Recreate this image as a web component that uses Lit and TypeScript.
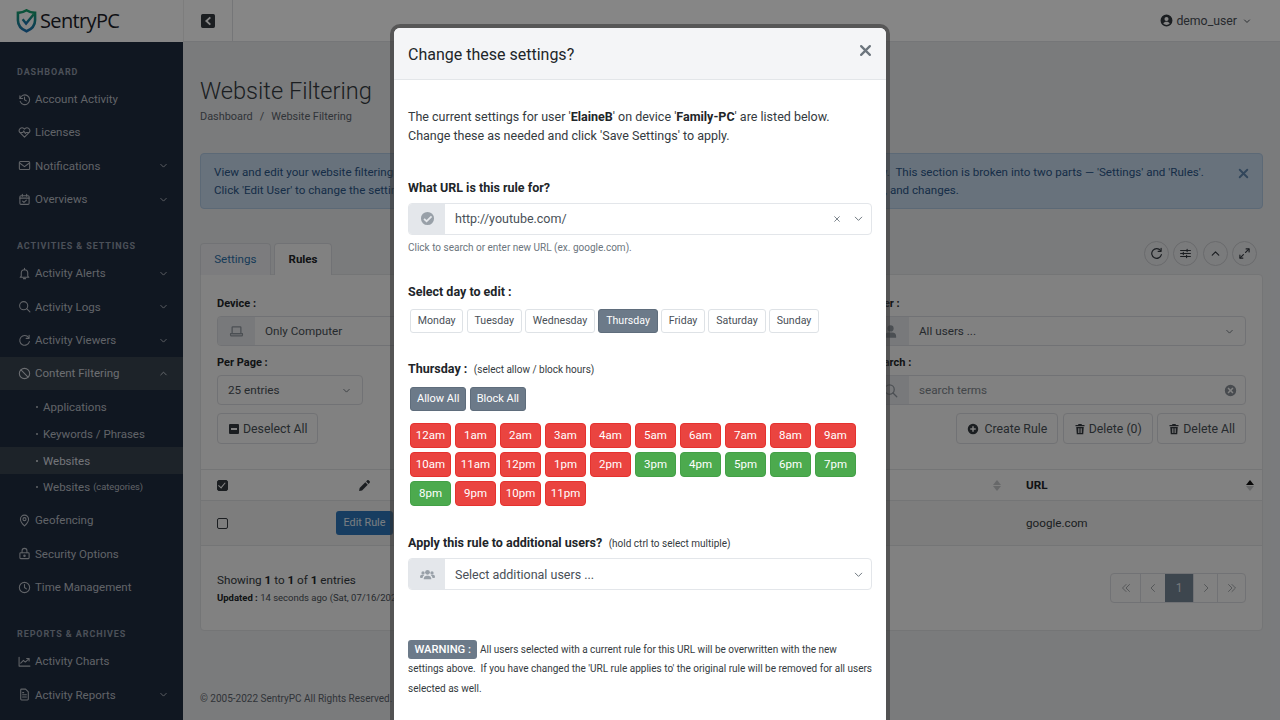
import { LitElement, html, css, svg, nothing } from "lit";
import { customElement } from "lit/decorators.js";

const paths: Record<string, any> = {
  history: svg`<path d="M3.5 5v5h5"/><path d="M3.8 10A9 9 0 1 1 4 15.5"/><path d="M12 7.5V12.5l3.5 2"/>`,
  heart: svg`<path d="M12 20.5 3.8 12.3a5.2 5.2 0 0 1 0-7.3 5.2 5.2 0 0 1 7.3 0l.9.9.9-.9a5.2 5.2 0 0 1 7.3 0 5.2 5.2 0 0 1 0 7.3z"/><path d="M4 12h5l1.5-3 3 5 1.5-2h5"/>`,
  mail: svg`<rect x="2.5" y="4.5" width="19" height="15" rx="2"/><path d="m3 7.5 9 6.5 9-6.5"/>`,
  calendar: svg`<rect x="3.5" y="5" width="17" height="16" rx="2"/><path d="M3.5 9.5h17M8 2.5V6M16 2.5V6"/><path d="m8.5 15 2.5 2.5 4.5-4.5"/>`,
  bell: svg`<path d="M6 17V11a6 6 0 0 1 12 0v6l2 2H4z"/><path d="M12 2.5V5M10 21.5h4"/>`,
  search: svg`<circle cx="10.5" cy="10.5" r="7.5"/><path d="m16 16 6 6"/>`,
  redo: svg`<path d="M19.5 6.5A9 9 0 1 0 21 14"/><path d="M20.5 2.5v5.5H15"/>`,
  ban: svg`<circle cx="12" cy="12" r="9.5"/><path d="m5.5 5.5 13 13"/>`,
  pin: svg`<path d="M12 22s7.5-7.2 7.5-12.5a7.5 7.5 0 0 0-15 0C4.500 14.800 12 22 12 22z"/><circle cx="12" cy="9.500" r="2.800"/>`,
  lock: svg`<rect x="3.500" y="10.500" width="17" height="11" rx="1.500"/><path d="M7.500 10.500V7a4.500 4.500 0 0 1 9 0v3.500"/><circle cx="12" cy="16" r="1.300"/>`,
  clock: svg`<circle cx="12" cy="12" r="9.500"/><path d="M12 6.500V12l3.500 2.500"/>`,
  chart: svg`<path d="M2 4v16.500h20"/><path d="m5 15 5-5 3.500 3L20 7"/><path d="M16 6.500h4.500V11"/>`,
  file: svg`<path d="M5 3.500a1.500 1.500 0 0 1 1.500-1.500H14l5 5v13.500a1.500 1.500 0 0 1-1.500 1.500h-11A1.500 1.500 0 0 1 5 20.500z"/><path d="M8.500 12.500h7M8.500 16.500h7M8.500 8.500h2"/>`,
  down: svg`<path d="m6 9.500 6 6 6-6"/>`,
  up: svg`<path d="m6 15 6-6 6 6"/>`,
  left: svg`<path d="m15 5-7 7 7 7"/>`,
  right: svg`<path d="m9 5 7 7-7 7"/>`,
  dleft: svg`<path d="m12 5-7 7 7 7M19 5l-7 7 7 7"/>`,
  dright: svg`<path d="m5 5 7 7-7 7M12 5l7 7-7 7"/>`,
  laptop: svg`<rect x="5" y="4.500" width="14" height="11" rx="1"/><path d="M2.500 15.500h19v2a1.500 1.500 0 0 1-1.500 1.500H4a1.500 1.500 0 0 1-1.500-1.500z"/>`,
  sliders: svg`<path d="M3 6.500h18M3 12h18M3 17.500h18"/><path d="M15 4.500v4M8 10v4M14 15.500v4"/>`,
  expand: svg`<path d="M14 10 20 4M10 14l-6 6"/><path d="M15 3.500h5.500V9M9 20.500H3.500V15"/>`,
  x: svg`<path d="m5 5 14 14M19 5 5 19"/>`,
};
const ic = (n: string, cls = "") => html`<svg class="i ${cls}" viewBox="0 0 24 24" fill="none" stroke="currentColor" stroke-width="2" stroke-linecap="round" stroke-linejoin="round">${paths[n]}</svg>`;

const solid = {
  trash: svg`<path d="M9 2h6l1 2h5v2.500H3V4h5z"/><path fill-rule="evenodd" d="M4.500 8h15l-1 14.500h-13zM8.500 10.500v9.500h1.500v-9.500zM11.250 10.500v9.500h1.500v-9.500zM14 10.500v9.500h1.500v-9.500z"/>`,
  plus: svg`<path fill-rule="evenodd" d="M12 1.500a10.500 10.500 0 1 1 0 21 10.500 10.500 0 0 1 0-21zM10.500 6.500V10.500H6.500v3h4v4h3v-4h4v-3h-4V6.500z"/>`,
  minus: svg`<path fill-rule="evenodd" d="M4 2h16a2 2 0 0 1 2 2v16a2 2 0 0 1-2 2H4a2 2 0 0 1-2-2V4a2 2 0 0 1 2-2zM6 10v4h12v-4z"/>`,
  user: svg`<circle cx="12" cy="7" r="5"/><path d="M3 22v-2a6.500 6.500 0 0 1 6.500-6.500h5A6.500 6.500 0 0 1 21 20v2z"/>`,
  users: svg`<circle cx="12" cy="8.500" r="3.800"/><circle cx="4.800" cy="9.500" r="2.600"/><circle cx="19.200" cy="9.500" r="2.600"/><path d="M6 19.500v-1.500a4.500 4.500 0 0 1 4.500-4h3a4.500 4.500 0 0 1 4.500 4v1.500z"/><path d="M0 16.500v-1a3 3 0 0 1 3-3h2.500a4 4 0 0 1 1.200.800A6 6 0 0 0 4 17.500H1zM24 16.500v-1a3 3 0 0 0-3-3h-2.500a4 4 0 0 0-1.200.800 6 6 0 0 1 2.700 4.200H23z"/>`,
  account: svg`<path fill-rule="evenodd" d="M12 1a11 11 0 1 1 0 22 11 11 0 0 1 0-22zM12 5.500a3.800 3.800 0 1 0 0 7.600 3.800 3.800 0 0 0 0-7.600zM12 14.500c-2.600 0-5 1-6 2.900a8 8 0 0 0 12 0c-1-1.900-3.400-2.900-6-2.900z"/>`,
  check: svg`<path fill-rule="evenodd" d="M12 1.500a10.500 10.500 0 1 1 0 21 10.500 10.500 0 0 1 0-21zM17.500 7.500l-7 7-3-3-2 2 5 5 9-9z"/>`,
  clear: svg`<path fill-rule="evenodd" d="M12 1.500a10.500 10.500 0 1 1 0 21 10.500 10.500 0 0 1 0-21zM8.500 6.500 6.500 8.500 10 12l-3.500 3.500 2 2L12 14l3.500 3.500 2-2L14 12l3.500-3.500-2-2L12 10z"/>`,
  pencil: svg`<path d="M17 2.500a2 2 0 0 1 2.800 0l1.700 1.700a2 2 0 0 1 0 2.800L19.500 9 15 4.500zM13.500 6 18 10.500 7.500 21 2 22l1-5.500z"/>`,
  collapse: svg`<path fill-rule="evenodd" d="M4 1.500h16A2.500 2.500 0 0 1 22.500 4v16a2.500 2.500 0 0 1-2.500 2.500H4A2.500 2.500 0 0 1 1.500 20V4A2.500 2.500 0 0 1 4 1.500zM14.500 5.500 7.500 12l7 6.500 2-2-4.800-4.500 4.800-4.500z"/>`,
};
const sic = (n: keyof typeof solid, cls = "") => html`<svg class="i ${cls}" viewBox="0 0 24 24" fill="currentColor">${solid[n]}</svg>`;

type NavItem = { label: string; icon: string; caret?: "down" | "up"; active?: boolean; sub?: { label: string; small?: string; active?: boolean }[] };
const nav: { title: string; items: NavItem[] }[] = [
  { title: "DASHBOARD", items: [
    { label: "Account Activity", icon: "history" },
    { label: "Licenses", icon: "heart" },
    { label: "Notifications", icon: "mail", caret: "down" },
    { label: "Overviews", icon: "calendar", caret: "down" },
  ]},
  { title: "ACTIVITIES & SETTINGS", items: [
    { label: "Activity Alerts", icon: "bell", caret: "down" },
    { label: "Activity Logs", icon: "search", caret: "down" },
    { label: "Activity Viewers", icon: "redo", caret: "down" },
    { label: "Content Filtering", icon: "ban", caret: "up", active: true, sub: [
      { label: "Applications" },
      { label: "Keywords / Phrases" },
      { label: "Websites", active: true },
      { label: "Websites", small: "(categories)" },
    ]},
    { label: "Geofencing", icon: "pin" },
    { label: "Security Options", icon: "lock" },
    { label: "Time Management", icon: "clock" },
  ]},
  { title: "REPORTS & ARCHIVES", items: [
    { label: "Activity Charts", icon: "chart" },
    { label: "Activity Reports", icon: "file", caret: "down" },
  ]},
];

const base = css`
  * { box-sizing: border-box; }
  .i { width: 14px; height: 14px; flex: none; display: block; }
`;

@customElement("app-sidebar")
class AppSidebar extends LitElement {
  static styles = [base, css`
    :host { display: flex; flex-direction: column; width: 183px; flex: none; background: #1f2c3f; color: #b8bdc5; font: 400 11.500px/16px Roboto, sans-serif; overflow: hidden; height: 720px; }
    .logo { height: 42px; flex: none; background: #fff; display: flex; align-items: center; padding-left: 16px; gap: 3px; }
    .logo svg { width: 21px; height: 24px; flex: none; margin-top: -1px; }
    .brand { font: 500 20px/24px "Open Sans", sans-serif; letter-spacing: -0.65px; color: #1c2128; }
    nav { padding-top: 23px; flex: 1; }
    .sec { font-size: 9px; line-height: 14px; font-weight: 700; letter-spacing: 0.9px; color: #8f99a8; padding-left: 17px; margin-top: 23.5px; margin-bottom: 3.5px; }
    .sec:first-child { margin-top: 0; }
    .item { height: 33.33px; display: flex; align-items: center; padding: 0 14px 0 18px; gap: 4px; }
    .item.on { background: #38434f; color: #cdd1d8; }
    .item .lbl { flex: 1; }
    .item .i { width: 13px; height: 13px; }
    .item .c { width: 11px; height: 11px; stroke-width: 2; }
    .subs { padding: 4px 0 3px; }
    .sub { height: 26.67px; display: flex; align-items: center; padding-left: 36px; gap: 3px; }
    .sub::before { content: ""; width: 2px; height: 2px; border-radius: 50%; background: currentColor; margin-right: 2px; }
    .sub.on { background: #38434f; color: #dcdfe5; }
    .sub small { font-size: 9.300px; }
  `];
  render() {
    return html`
      <div class="logo">
        <svg viewBox="0 0 24 28">
          <defs><linearGradient id="g" x1="0" y1="0" x2="0" y2="1"><stop offset="0" stop-color="#15a06a"/><stop offset="1" stop-color="#1a6fb0"/></linearGradient></defs>
          <path d="M2 4.500c4 0 7-1 10-3 3 2 6 3 10 3v8.500c0 6-4 10.500-10 13C6 23.500 2 19 2 13z" fill="none" stroke="url(#g)" stroke-width="3"/>
          <path d="m7.500 12 4 5 9-11" fill="none" stroke="url(#g)" stroke-width="2.800"/>
        </svg>
        <span class="brand">SentryPC</span>
      </div>
      <nav>
        ${nav.map(s => html`
          <div class="sec">${s.title}</div>
          ${s.items.map(it => html`
            <div class="item ${it.active ? "on" : ""}">
              ${ic(it.icon)}<span class="lbl">${it.label}</span>
              ${it.caret ? ic(it.caret, "c") : nothing}
            </div>
            ${it.sub ? html`<div class="subs">${it.sub.map(x => html`
              <div class="sub ${x.active ? "on" : ""}"><span>${x.label}</span>${x.small ? html`<small>${x.small}</small>` : nothing}</div>`)}</div>` : nothing}
          `)}
        `)}
      </nav>
    `;
  }
}

@customElement("app-modal")
class AppModal extends LitElement {
  static styles = [base, css`
    :host { display: flex; justify-content: center; align-items: flex-start; position: absolute; inset: 0; z-index: 10; padding-top: 28px; background: rgba(0,0,0,.475); overflow: hidden; font: 400 12.500px/19px Roboto, sans-serif; color: #343a40; }
    .dlg { width: 492px; min-height: 760px; background: #fff; border-radius: 6px 6px 0 0; box-shadow: 0 0 0 4px rgba(50,50,50,.55); flex: none; }
    header { height: 52px; background: #f4f5f7; border-bottom: 1px solid #e3e6e9; border-radius: 6px 6px 0 0; display: flex; align-items: center; justify-content: space-between; padding: 0 13px 0 14px; }
    h2 { font: 400 16px/24px Roboto, sans-serif; margin: 2px 0 0; color: #212529; }
    .close { width: 15px; height: 15px; color: #6c757d; stroke-width: 3.600; margin-top: -6px; }
    .body { padding: 26.5px 14px 0; }
    p { margin: 0; }
    b { font-weight: 700; color: #212529; }
    .lab { font: 700 12.500px/18px Roboto, sans-serif; color: #212529; }
    .lab span { font: 400 10px/18px Roboto, sans-serif; color: #343a40; margin-left: 6.500px; }
    .sel { display: flex; height: 32px; border: 1px solid #e3e6ea; border-radius: 4px; margin-top: 7px; align-items: center; overflow: hidden; }
    .add { width: 36px; align-self: stretch; background: #e4e7eb; display: flex; align-items: center; justify-content: center; color: #98a0a8; flex: none; }
    .add .i { width: 15px; height: 15px; }
    .val { flex: 1; padding-left: 10px; font-size: 12.500px; color: #495057; }
    .sel .c { width: 13px; height: 13px; color: #6c757d; margin-right: 6px; stroke-width: 1.800; }
    .sel .clr { width: 8px; height: 8px; color: #5c6670; margin-right: 11px; stroke-width: 2.400; }
    .help { font-size: 10px; line-height: 14px; margin-top: 6px; color: #6c757d; }
    .row { display: flex; gap: 3.300px; padding-left: 2px; margin-top: 8px; }
    .btn { height: 24px; padding: 0 6.800px; border: 1px solid #dee2e6; border-radius: 3px; font-size: 10.600px; line-height: 22px; color: #495057; background: #fff; }
    .btn.dark { background: #6c7a89; border-color: #5f6d7c; color: #fff; }
    .btn.sq { font-size: 11px; padding: 0 6px; }
    .hours { display: grid; grid-template-columns: repeat(10, 41px); gap: 4px; grid-auto-rows: 25.500px; row-gap: 3.500px; padding-left: 2px; margin-top: 12px; }
    .h { border-radius: 4px; color: #fff; display: flex; align-items: center; justify-content: center; font-size: 11.500px; }
    .h.r { background: #ea4440; border: 1px solid #e5322e; }
    .h.g { background: #4caa4e; border: 1px solid #43a047; }
    .warn { margin-top: 50px; font-size: 10px; line-height: 19.300px; color: #343a40; white-space: nowrap; }
    .badge { display: inline-block; background: #6c7a89; color: #fff; font-size: 11.200px; font-weight: 500; line-height: 19px; padding: 0 6.500px; border-radius: 3px; }
  `];
  render() {
    const green = new Set([15, 16, 17, 18, 19, 20]);
    const name = (h: number) => `${h % 12 === 0 ? 12 : h % 12}${h < 12 ? "am" : "pm"}`;
    const days = ["Monday", "Tuesday", "Wednesday", "Thursday", "Friday", "Saturday", "Sunday"];
    return html`
      <div class="dlg">
        <header><h2>Change these settings?</h2>${ic("x", "close")}</header>
        <div class="body">
          <p>The current settings for user '<b>ElaineB</b>' on device '<b>Family-PC</b>' are listed below.<br>Change these as needed and click 'Save Settings' to apply.</p>
          <div class="lab" style="margin-top:34px">What URL is this rule for?</div>
          <div class="sel" style="margin-top:6px"><div class="add">${sic("check")}</div><div class="val">http://youtube.com/</div>${ic("x", "clr")}${ic("down", "c")}</div>
          <div class="help">Click to search or enter new URL (ex. google.com).</div>
          <div class="lab" style="margin-top:28px">Select day to edit :</div>
          <div class="row">${days.map(d => html`<div class="btn ${d === "Thursday" ? "dark" : ""}">${d}</div>`)}</div>
          <div class="lab" style="margin-top:27px">Thursday :<span>(select allow / block hours)</span></div>
          <div class="row" style="margin-top:8px"><div class="btn dark sq">Allow All</div><div class="btn dark sq">Block All</div></div>
          <div class="hours">${Array.from({ length: 24 }, (_, h) => html`<div class="h ${green.has(h) ? "g" : "r"}">${name(h)}</div>`)}</div>
          <div class="lab" style="margin-top:28px">Apply this rule to additional users?<span>(hold ctrl to select multiple)</span></div>
          <div class="sel" style="margin-top:5px"><div class="add">${sic("users")}</div><div class="val">Select additional users ...</div>${ic("down", "c")}</div>
          <p class="warn"><span class="badge">WARNING :</span> All users selected with a current rule for this URL will be overwritten with the new<br>settings above.&nbsp; If you have changed the 'URL rule applies to' the original rule will be removed for all users<br>selected as well.</p>
        </div>
      </div>
    `;
  }
}

@customElement("app-root")
class AppRoot extends LitElement {
  static styles = [base, css`
    :host { display: flex; width: 1280px; height: 720px; position: relative; overflow: hidden; font: 400 11.700px/18px Roboto, sans-serif; color: #343a40; background: #e9eaed; }
    main { flex: 1; min-width: 0; display: flex; flex-direction: column; }
    .top { height: 42px; background: #fff; border-bottom: 1px solid #dfe1e4; display: flex; align-items: center; justify-content: space-between; flex: none; }
    .toggle { width: 50px; height: 100%; border-right: 1px solid #dfe1e4; border-left: 1px solid #eee; display: flex; align-items: center; justify-content: center; color: #343a40; }
    .toggle .i { width: 16px; height: 16px; }
    .user { display: flex; align-items: center; gap: 3px; padding-right: 28px; font-size: 12.300px; color: #495057; }
    .user .i { width: 13px; height: 13px; color: #343a40; }
    .user .c { width: 10px; height: 10px; margin-left: 2px; }
    .content { padding: 33px 17px 0; }
    h1 { font: 300 23.600px/32px Roboto, sans-serif; margin: 0; color: #343a40; }
    .crumb { margin-top: 2px; font-size: 10.900px; line-height: 16px; color: #5c646c; display: flex; gap: 7px; }
    .alert { margin-top: 28px; height: 56px; background: #c6d9ec; border: 1px solid #b0c8e1; border-radius: 4px; padding: 9px 13px; display: flex; justify-content: space-between; color: #2b5688; font-size: 11.600px; white-space: pre; }
    .alert .i { width: 13px; height: 13px; margin: 4px -1px 0 0; color: #5f86ad; stroke-width: 3.500; }
    .tabbar { margin-top: 34px; display: flex; justify-content: space-between; align-items: flex-start; height: 31px; }
    .tabs { display: flex; gap: 3px; }
    .tab { height: 32px; padding: 0 13.200px; border: 1px solid #d8dade; border-bottom: none; border-radius: 4px 4px 0 0; line-height: 31px; color: #2d70a8; background: #ecedf0; font-size: 11.600px; }
    .tab.on { color: #212529; font-weight: 700; background: #f5f5f5; padding: 0 13.800px; font-size: 11.500px; }
    .rounds { display: flex; gap: 4.500px; padding-right: 6px; margin-top: -2px; }
    .round { width: 25px; height: 25px; border: 1px solid #c8cacd; border-radius: 50%; display: flex; align-items: center; justify-content: center; color: #343a40; }
    .round .i { width: 13px; height: 13px; stroke-width: 2.200; }
    .card { background: #f5f5f5; border: 1px solid #dcdee1; border-radius: 0 4px 4px 4px; height: 357px; }
    .filters { display: grid; grid-template-columns: 375px 1fr 375px; padding: 22px 16px 0; height: 194px; }
    .col { display: flex; flex-direction: column; align-items: flex-start; }
    .col.r { grid-column: 3; }
    .fl { font-weight: 700; font-size: 11px; line-height: 14px; color: #212529; margin-bottom: 5px; }
    .fl.n { margin-top: 10px; margin-bottom: 5px; }
    .inp { height: 30px; width: 100%; border: 1px solid #d8dade; border-radius: 4px; display: flex; align-items: center; background: #f5f5f5; overflow: hidden; color: #495057; }
    .inp.small { width: 146px; padding: 0 10px; justify-content: space-between; }
    .inp .add { width: 37px; align-self: stretch; background: #e4e6ea; display: flex; align-items: center; justify-content: center; color: #8f969e; }
    .inp .add .i { width: 15px; height: 15px; }
    .inp .v { flex: 1; padding-left: 10px; }
    .inp .ph { color: #7e858c; }
    .inp .c { width: 11px; height: 11px; color: #6c757d; margin-right: 10px; }
    .inp.small .c { margin: 0; }
    .inp .clr { width: 13px; height: 13px; color: #8a9097; margin-right: 8px; }
    .btns { display: flex; gap: 4.500px; margin-top: 8px; }
    .col.r .btns { align-self: flex-end; }
    .b { height: 31px; padding: 0 10px; border: 1px solid #d8dade; border-radius: 4px; display: flex; align-items: center; gap: 5px; color: #495057; font-size: 12.300px; }
    .b.t { gap: 3px; }
    .b .i { width: 12px; height: 12px; color: #343a40; }
    .tr { display: grid; grid-template-columns: 98px 131px 1fr 253px; border-top: 1px solid #dcdee1; align-items: center; }
    .tr.h { height: 31px; font-weight: 700; color: #212529; font-size: 11.700px; }
    .tr.d { height: 45px; background: #eeeeee; }
    .tr > div { display: flex; align-items: center; padding-left: 16px; }
    .tr > .ce { padding: 0; justify-content: center; }
    .tr > .sortc { justify-content: space-between; padding: 0 8px 0 17px; height: 100%; }
    .tr > .sortc.mid { justify-content: flex-end; }
    .tr > .url { padding-left: 17px; }
    .cb { width: 11px; height: 11px; border: 1.500px solid #343a40; border-radius: 2px; }
    .cb.on { background: #343a40; position: relative; }
    .cb.on::after { content: ""; position: absolute; left: 2.200px; top: 0.500px; width: 3px; height: 5.500px; border: solid #fff; border-width: 0 1.500px 1.500px 0; transform: rotate(40deg); }
    .pen { width: 13px; height: 13px; color: #343a40; }
    .edit { width: 57px; height: 24px; border-radius: 3px; background: #2c75b8; color: #e6eef6; font-size: 10.800px; display: flex; align-items: center; justify-content: center; }
    .sort { display: flex; flex-direction: column; gap: 1px; width: 8px; }
    .sort i { display: block; width: 0; height: 0; border: 4px solid transparent; border-top-width: 0; border-bottom-width: 5px; border-bottom-color: #c4c6c9; }
    .sort i + i { border-bottom-width: 0; border-top-width: 5px; border-top-color: #c4c6c9; }
    .sort.act i:first-child { border-bottom-color: #111; }
    .foot { border-top: 1px solid #dcdee1; display: flex; justify-content: space-between; padding: 26px 16px 0; height: 86px; }
    .show { line-height: 16px; }
    .show b { font-weight: 700; color: #212529; }
    .upd { font-size: 9.500px; line-height: 14px; margin-top: 3px; color: #495057; white-space: nowrap; }
    .upd b { color: #212529; }
    .pager { display: flex; height: 30px; margin-top: 1px; border: 1px solid #d8dade; border-radius: 4px; overflow: hidden; color: #9a9da1; font-size: 12px; }
    .pager > div { display: flex; align-items: center; justify-content: center; }
    .pager > div + div { border-left: 1px solid #d8dade; }
    .pager .i { width: 12px; height: 12px; stroke-width: 1.800; }
    .pager .cur { background: #758595; color: #dfe3e8; border: none; }
    .p1 { width: 28px; } .p2 { width: 25px; } .p3 { width: 28px; } .p4 { width: 24px; } .p5 { width: 29px; }
    .copy { margin-top: 59px; font-size: 10px; color: #5c646c; }
  `];
  render() {
    return html`
      <app-sidebar></app-sidebar>
      <main>
        <div class="top">
          <div class="toggle">${sic("collapse")}</div>
          <div class="user">${sic("account")}<span>demo_user</span>${ic("down", "c")}</div>
        </div>
        <div class="content">
          <h1>Website Filtering</h1>
          <div class="crumb"><span>Dashboard</span><span>/</span><span>Website Filtering</span></div>
          <div class="alert">
            <div>View and edit your website filtering rules for any user on every device on your account using the options shown in the section below.  This section is broken into two parts — 'Settings' and 'Rules'.
Click 'Edit User' to change the settings of any user, or click 'Edit Rule' to update any existing rule with any of your very own additions, and changes.</div>
            ${ic("x")}
          </div>
          <div class="tabbar">
            <div class="tabs"><div class="tab">Settings</div><div class="tab on">Rules</div></div>
            <div class="rounds">
              <div class="round">${ic("redo")}</div><div class="round">${ic("sliders")}</div><div class="round">${ic("up")}</div><div class="round">${ic("expand")}</div>
            </div>
          </div>
          <div class="card">
            <div class="filters">
              <div class="col">
                <div class="fl">Device :</div>
                <div class="inp"><div class="add">${ic("laptop")}</div><div class="v">Only Computer</div></div>
                <div class="fl n">Per Page :</div>
                <div class="inp small"><span>25 entries</span>${ic("down", "c")}</div>
                <div class="btns"><div class="b t">${sic("minus")}Deselect All</div></div>
              </div>
              <div class="col r">
                <div class="fl">User :</div>
                <div class="inp"><div class="add">${sic("user")}</div><div class="v">All users ...</div>${ic("down", "c")}</div>
                <div class="fl n">Search :</div>
                <div class="inp"><div class="add">${ic("search")}</div><div class="v ph">search terms</div>${sic("clear", "clr")}</div>
                <div class="btns"><div class="b">${sic("plus")}Create Rule</div><div class="b t">${sic("trash")}Delete (0)</div><div class="b t">${sic("trash")}Delete All</div></div>
              </div>
            </div>
            <div class="tr h">
              <div><span class="cb on"></span></div>
              <div class="ce">${sic("pencil", "pen")}</div>
              <div class="sortc mid"><span class="sort"><i></i><i></i></span></div>
              <div class="sortc"><span>URL</span><span class="sort act"><i></i><i></i></span></div>
            </div>
            <div class="tr d">
              <div><span class="cb"></span></div>
              <div class="ce"><div class="edit">Edit Rule</div></div>
              <div></div>
              <div class="url">google.com</div>
            </div>
            <div class="foot">
              <div class="show">
                <div>Showing <b>1</b> to <b>1</b> of <b>1</b> entries</div>
                <div class="upd"><b>Updated :</b> 14 seconds ago (Sat, 07/16/2022 10:14:21 AM)</div>
              </div>
              <div class="pager">
                <div class="p5">${ic("dleft")}</div><div class="p2">${ic("left")}</div><div class="cur p1">1</div><div class="p4">${ic("right")}</div><div class="p3">${ic("dright")}</div>
              </div>
            </div>
          </div>
          <div class="copy">© 2005-2022 SentryPC All Rights Reserved.</div>
        </div>
      </main>
      <app-modal></app-modal>
    `;
  }
}
